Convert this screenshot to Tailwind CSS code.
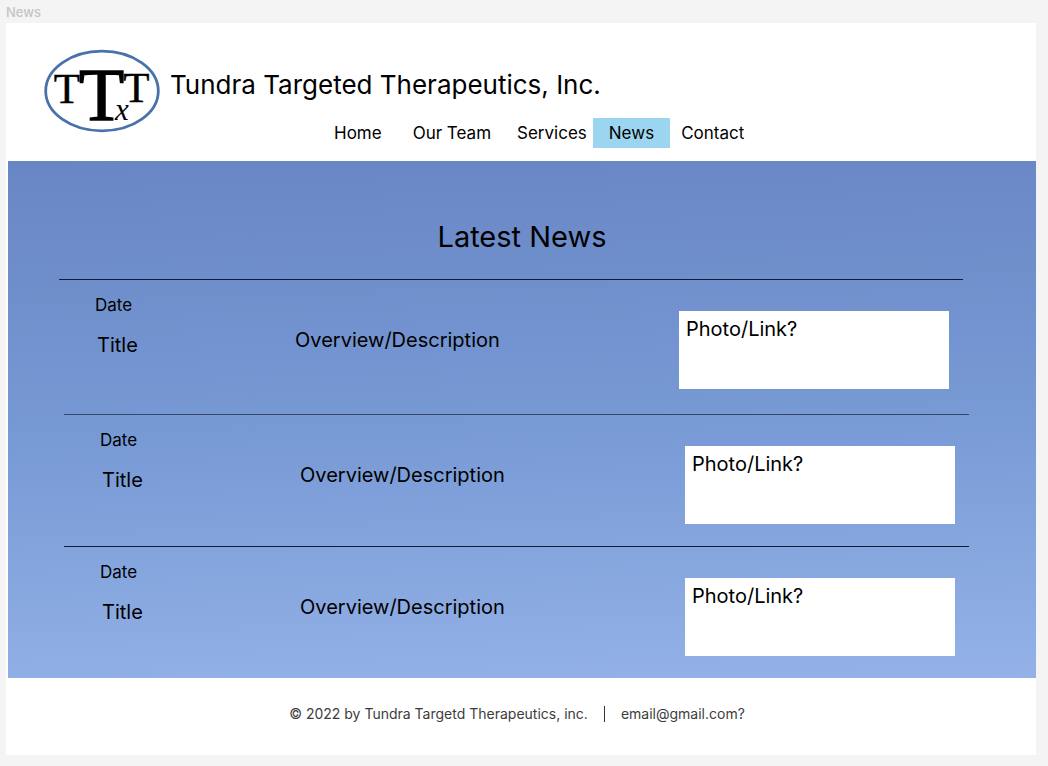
<!DOCTYPE html>
<html lang="en">
<head>
<meta charset="utf-8">
<meta name="viewport" content="width=device-width, initial-scale=1">
<title>News</title>
<script src="https://cdn.jsdelivr.net/npm/@tailwindcss/browser@4"></script>
</head>
<body class="min-h-screen bg-[#f4f4f4] pl-[6px] pr-3 pb-[11px] font-['Inter','Liberation_Sans',sans-serif] text-black">
  <p class="h-[23px] text-[13px] leading-6 font-medium text-[#c4c4c4]">News</p>
  <div class="bg-white">
    <header class="flex gap-[10px] pl-[38px] pt-[27px] pb-[13px]">
      <svg class="h-[83px] w-[116px] shrink-0 overflow-visible" viewBox="0 0 116 83" role="img" aria-label="Tundra Targeted Therapeutics logo">
        <ellipse cx="58" cy="41" rx="56.300" ry="39.800" fill="white" stroke="#4a72aa" stroke-width="2.800"/>
        <g font-family="'Liberation Serif', serif" text-anchor="middle">
          <text x="23" y="53" font-size="43" stroke="black" stroke-width="0.400">T</text>
          <text x="57.500" y="69.500" font-size="74" stroke="black" stroke-width="1.400">T</text>
          <text x="92.500" y="52" font-size="43" stroke="black" stroke-width="0.400">T</text>
          <text x="78" y="70" font-size="31" font-style="italic">x</text>
        </g>
      </svg>
      <div class="flex flex-col gap-[17px] pt-[19px]">
        <h1 class="text-[26px] leading-8">Tundra Targeted Therapeutics, Inc.</h1>
        <nav class="flex pl-[164px] text-[17px] leading-[30px]">
          <a href="#" class="mr-[31px]">Home</a>
          <a href="#" class="mr-[26px]">Our Team</a>
          <a href="#" class="mr-[6px]">Services</a>
          <a href="#" aria-current="page" class="mr-[11px] bg-[#9cd5ef] px-4">News</a>
          <a href="#">Contact</a>
        </nav>
      </div>
    </header>
    <main class="ml-[2px] bg-linear-[178deg] from-[#6886c4] via-[#7799d4] to-[#94b2e8] pt-14">
      <h2 class="text-center text-[29px] leading-10">Latest News</h2>
      <article class="ml-[51px] mr-[73px] mt-[22px] grid grid-cols-[200px_1fr_270px] items-start gap-x-9 border-t border-[#111c30] pr-[14px] pb-[25px]">
        <div class="pl-9 pt-[11px]">
          <p class="text-[17px] leading-7">Date</p>
          <h3 class="mt-3 pl-[2px] text-[20px] leading-7">Title</h3>
        </div>
        <p class="pt-[46px] text-[20px] leading-7">Overview/Description</p>
        <a href="#" class="mt-[31px] block h-[78px] bg-white px-[7px] py-1 text-[20px] leading-7">Photo/Link?</a>
      </article>
      <article class="ml-14 mr-[67px] grid grid-cols-[200px_1fr_270px] items-start gap-x-9 border-t border-[#33466c] pr-[14px] pb-[22px]">
        <div class="pl-9 pt-[11px]">
          <p class="text-[17px] leading-7">Date</p>
          <h3 class="mt-3 pl-[2px] text-[20px] leading-7">Title</h3>
        </div>
        <p class="pt-[46px] text-[20px] leading-7">Overview/Description</p>
        <a href="#" class="mt-[31px] block h-[78px] bg-white px-[7px] py-1 text-[20px] leading-7">Photo/Link?</a>
      </article>
      <article class="ml-14 mr-[67px] grid grid-cols-[200px_1fr_270px] items-start gap-x-9 border-t border-[#111c30] pr-[14px] pb-[22px]">
        <div class="pl-9 pt-[11px]">
          <p class="text-[17px] leading-7">Date</p>
          <h3 class="mt-3 pl-[2px] text-[20px] leading-7">Title</h3>
        </div>
        <p class="pt-[46px] text-[20px] leading-7">Overview/Description</p>
        <a href="#" class="mt-[31px] block h-[78px] bg-white px-[7px] py-1 text-[20px] leading-7">Photo/Link?</a>
      </article>
    </main>
    <footer class="flex items-center justify-center pt-[26px] pr-2 pb-[31px] text-[14px] leading-5 text-[#3c3c3c]">
      <p>© 2022 by Tundra Targetd Therapeutics, inc.</p>
      <span class="mx-4 h-4 w-px bg-[#333]"></span>
      <a href="mailto:email@gmail.com">email@gmail.com?</a>
    </footer>
  </div>
</body>
</html>
